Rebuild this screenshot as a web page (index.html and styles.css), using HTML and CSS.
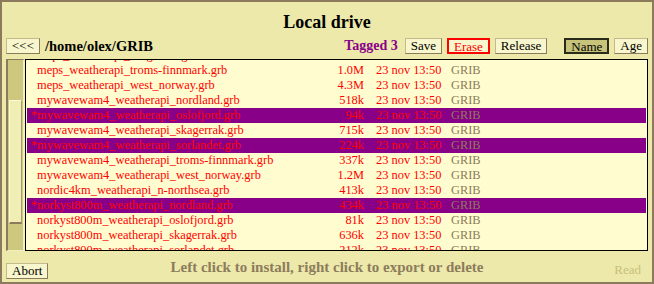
FILE: index.html
```html
<!DOCTYPE html>
<html>
<head>
<meta charset="utf-8">
<link rel="stylesheet" href="styles.css">
</head>
<body>
<div class="window">
  <h1 class="title">Local drive</h1>
  <div class="toolbar">
    <button class="btn">&lt;&lt;&lt;</button>
    <span class="path">/home/olex/GRIB</span>
    <span class="spacer"></span>
    <span class="tagged">Tagged 3</span>
    <button class="btn">Save</button>
    <button class="btn erase">Erase</button>
    <button class="btn">Release</button>
    <button class="btn active sort">Name</button>
    <button class="btn">Age</button>
  </div>
  <div class="main">
    <div class="scroll"><div class="thumb"></div></div>
    <div class="list">
      <div class="rows">
        <div class="row"><span class="star"></span><span class="name">meps_weatherapi_skagerrak.grb</span><span class="size">702k</span><span class="date">23 nov 13:50</span><span class="type">GRIB</span></div>
        <div class="row"><span class="star"></span><span class="name">meps_weatherapi_troms-finnmark.grb</span><span class="size">1.0M</span><span class="date">23 nov 13:50</span><span class="type">GRIB</span></div>
        <div class="row"><span class="star"></span><span class="name">meps_weatherapi_west_norway.grb</span><span class="size">4.3M</span><span class="date">23 nov 13:50</span><span class="type">GRIB</span></div>
        <div class="row"><span class="star"></span><span class="name">mywavewam4_weatherapi_nordland.grb</span><span class="size">518k</span><span class="date">23 nov 13:50</span><span class="type">GRIB</span></div>
        <div class="row tag"><span class="star">*</span><span class="name">mywavewam4_weatherapi_oslofjord.grb</span><span class="size">94k</span><span class="date">23 nov 13:50</span><span class="type">GRIB</span></div>
        <div class="row"><span class="star"></span><span class="name">mywavewam4_weatherapi_skagerrak.grb</span><span class="size">715k</span><span class="date">23 nov 13:50</span><span class="type">GRIB</span></div>
        <div class="row tag"><span class="star">*</span><span class="name">mywavewam4_weatherapi_sorlandet.grb</span><span class="size">224k</span><span class="date">23 nov 13:50</span><span class="type">GRIB</span></div>
        <div class="row"><span class="star"></span><span class="name">mywavewam4_weatherapi_troms-finnmark.grb</span><span class="size">337k</span><span class="date">23 nov 13:50</span><span class="type">GRIB</span></div>
        <div class="row"><span class="star"></span><span class="name">mywavewam4_weatherapi_west_norway.grb</span><span class="size">1.2M</span><span class="date">23 nov 13:50</span><span class="type">GRIB</span></div>
        <div class="row"><span class="star"></span><span class="name">nordic4km_weatherapi_n-northsea.grb</span><span class="size">413k</span><span class="date">23 nov 13:50</span><span class="type">GRIB</span></div>
        <div class="row tag"><span class="star">*</span><span class="name">norkyst800m_weatherapi_nordland.grb</span><span class="size">434k</span><span class="date">23 nov 13:50</span><span class="type">GRIB</span></div>
        <div class="row"><span class="star"></span><span class="name">norkyst800m_weatherapi_oslofjord.grb</span><span class="size">81k</span><span class="date">23 nov 13:50</span><span class="type">GRIB</span></div>
        <div class="row"><span class="star"></span><span class="name">norkyst800m_weatherapi_skagerrak.grb</span><span class="size">636k</span><span class="date">23 nov 13:50</span><span class="type">GRIB</span></div>
        <div class="row"><span class="star"></span><span class="name">norkyst800m_weatherapi_sorlandet.grb</span><span class="size">212k</span><span class="date">23 nov 13:50</span><span class="type">GRIB</span></div>
      </div>
    </div>
  </div>
  <div class="footer">
    <button class="btn abort">Abort</button>
    <span class="status">Left click to install, right click to export or delete</span>
    <span class="read">Read</span>
  </div>
</div>
</body>
</html>
```
FILE: styles.css
```css
* { box-sizing: border-box; }
body {
  margin: 0;
  font-family: "Liberation Serif", "Times New Roman", serif;
}
.window {
  width: 654px;
  height: 284px;
  border: 2px solid #8c7a5c;
  background: #ece9aa;
  padding: 0 4px;
  display: flex;
  flex-direction: column;
  overflow: hidden;
}
.title {
  margin: 0;
  height: 36px;
  padding-top: 8px;
  line-height: 24px;
  font-size: 18px;
  font-weight: bold;
  text-align: center;
  color: #000;
}
.toolbar {
  display: flex;
  align-items: center;
  height: 16px;
}
.btn {
  font-family: "Liberation Serif", "Times New Roman", serif;
  font-size: 13px;
  line-height: 14px;
  height: 16px;
  padding: 0 5px;
  margin: 0;
  border: 1px solid;
  border-color: #c4ba8c #8c7a5c #8c7a5c #c4ba8c;
  background: #f8f6cc;
  color: #000;
}
.toolbar .btn + .btn { margin-left: 5px; }
.toolbar .btn.sort { margin-left: 17px; }
.btn.erase {
  border: 2px solid #ff0000;
  color: #ff0000;
  padding: 0 5px;
}
.btn.active {
  background: #c8c37a;
  border: 2px solid #2a2a1a;
  padding: 0 5px;
}
.path {
  margin-left: 5px;
  font-weight: bold;
  font-size: 14.5px;
  line-height: 16px;
}
.spacer { flex: 1; }
.tagged {
  color: #8b008b;
  font-weight: bold;
  font-size: 14px;
  line-height: 16px;
  margin-right: 7px;
}
.main {
  display: flex;
  margin-top: 5px;
  height: 192px;
}
.scroll {
  width: 19px;
  background: #cdc87e;
  border-top: 1px solid #8c7a5c;
  border-left: 2px solid #8c7a5c;
  border-right: 2px solid #f3f0c0;
  border-bottom: 1px solid #f3f0c0;
  padding: 40px 1px 0 1px;
}
.thumb {
  width: 13px;
  height: 124px;
  background: #f0edb5;
  border-top: 1px solid #fbf9d8;
  border-left: 1px solid #fbf9d8;
  border-bottom: 2px solid #8c7a5c;
  border-right: 1px solid #a89a6c;
}
.list {
  flex: 1;
  border: 1px solid #000;
  background: #fffdd0;
  padding: 0 1px;
  overflow: hidden;
}
.rows { margin-top: -12px; }
.row {
  display: flex;
  height: 15px;
  line-height: 15px;
  font-size: 12.4px;
  color: #ff0000;
  padding-left: 4px;
  white-space: nowrap;
}
.row.tag { background: #880088; }
.star { width: 6px; }
.name { width: 270px; }
.size { width: 57px; text-align: right; }
.date { margin-left: 12px; width: 75px; }
.type { color: #8c7c58; }
.footer {
  display: grid;
  grid-template-columns: 1fr auto 1fr;
  align-items: start;
  margin-top: 12px;
}
.abort { justify-self: start; }
.status {
  margin-top: -4px;
  font-weight: bold;
  font-size: 15px;
  line-height: 16px;
  color: #8c7c5c;
}
.read {
  justify-self: end;
  margin-right: 7px;
  margin-top: -1px;
  font-size: 13px;
  line-height: 16px;
  color: #c8bf7a;
}
```
